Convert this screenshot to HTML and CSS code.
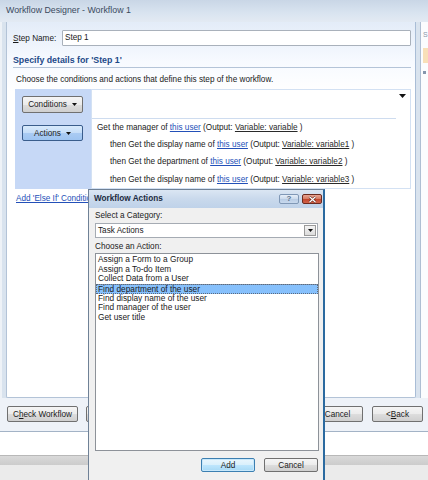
FILE: index.html
```html
<!DOCTYPE html>
<html>
<head>
<meta charset="utf-8">
<link rel="stylesheet" href="styles.css">
</head>
<body>
<div class="screen">
  <div class="titlebar">Workflow Designer - Workflow 1</div>
  <div class="window">
    <div class="window-main">
      <div class="panel">
        <div class="step-row">
          <span class="step-label"><u>S</u>tep Name:</span>
          <div class="step-input">Step 1</div>
        </div>
        <div class="heading">Specify details for 'Step 1'</div>
        <div class="desc">Choose the conditions and actions that define this step of the workflow.</div>
        <div class="block">
          <div class="block-left">
            <div class="btn btn-cond">Conditions <svg class="tri" width="5" height="3" viewBox="0 0 5 3"><path d="M0 0H5L2.5 3Z" fill="#111"/></svg></div>
            <div class="btn btn-actions">Actions <svg class="tri" width="5" height="3" viewBox="0 0 5 3"><path d="M0 0H5L2.5 3Z" fill="#111"/></svg></div>
          </div>
          <div class="block-right">
            <div class="cond-row"><svg class="cond-arrow" width="7" height="4" viewBox="0 0 7 4"><path d="M0 0H7L3.5 4Z" fill="#111"/></svg></div>
            <div class="act-lines">
              <div class="act">Get the manager of <a class="lnk">this user</a> (Output: <span class="var">Variable: variable</span> )</div>
              <div class="act sub">then Get the display name of <a class="lnk">this user</a> (Output: <span class="var">Variable: variable1</span> )</div>
              <div class="act sub">then Get the department of <a class="lnk">this user</a> (Output: <span class="var">Variable: variable2</span> )</div>
              <div class="act sub">then Get the display name of <a class="lnk">this user</a> (Output: <span class="var">Variable: variable3</span> )</div>
            </div>
          </div>
        </div>
        <div class="else-link"><a class="lnk">Add 'Else If' Condition</a></div>
      </div>
      <div class="side">
        <div class="side-txt">S</div>
        <div class="side-hl"></div>
        <div class="side-mark"></div>
      </div>
    </div>
    <div class="footer">
      <div class="btn fbtn btn-check">C<u>h</u>eck Workflow</div>
      <div class="btn fbtn btn-init">Initiation</div>
      <div class="btn fbtn btn-cancel">Cancel</div>
      <div class="btn fbtn btn-back">&lt; <u>B</u>ack</div>
      <div class="btn fbtn btn-next"></div>
    </div>
  </div>
  <div class="below-white"></div>
  <div class="below-bar"></div>
  <div class="below-grey"></div>

  <div class="dialog">
    <div class="dlg-title">
      <span class="dlg-title-text">Workflow Actions</span>
      <div class="tbtn tbtn-help">?</div>
      <div class="tbtn tbtn-close"><svg width="9" height="7" viewBox="0 0 9 7"><path d="M1.5 0.8L7.5 6.2M7.5 0.8L1.5 6.2" stroke="#5a1e14" stroke-width="2.4"/><path d="M1.5 0.8L7.5 6.2M7.5 0.8L1.5 6.2" stroke="#fff" stroke-width="1.3"/></svg></div>
    </div>
    <div class="dlg-body">
      <div class="dlg-label">Select a Category:</div>
      <div class="select">
        <span>Task Actions</span>
        <div class="select-btn"><svg width="5" height="3" viewBox="0 0 5 3"><path d="M0 0H5L2.5 3Z" fill="#111"/></svg></div>
      </div>
      <div class="dlg-label dlg-label2">Choose an Action:</div>
      <div class="list">
        <div class="item">Assign a Form to a Group</div>
        <div class="item">Assign a To-do Item</div>
        <div class="item">Collect Data from a User</div>
        <div class="item selected">Find department of the user</div>
        <div class="item">Find display name of the user</div>
        <div class="item">Find manager of the user</div>
        <div class="item">Get user title</div>
      </div>
      <div class="dlg-buttons">
        <div class="btn dbtn btn-default">Add</div>
        <div class="btn dbtn">Cancel</div>
      </div>
    </div>
  </div>
</div>
</body>
</html>
```

FILE: styles.css
```css
html, body {
  margin: 0;
  padding: 0;
  background: #fff;
}

.screen {
  position: relative;
  width: 428px;
  height: 480px;
  overflow: hidden;
  font-family: "Liberation Sans", Arial, sans-serif;
  font-size: 8.2px;
  color: #1a1a1a;
  background: #fff;
}

u { text-decoration: underline; }

/* ---------- title bar ---------- */
.titlebar {
  height: 22px;
  box-sizing: border-box;
  padding: 1px 0 0 6px;
  line-height: 18px;
  font-size: 8.8px;
  color: #3b4a5d;
  background: linear-gradient(#c9d6e6, #d9e4f0 60%, #e3eaf3);
}

/* ---------- main window ---------- */
.window {
  height: 410px;
  display: flex;
  flex-direction: column;
}

.window-main {
  height: 376px;
  display: flex;
  padding-left: 6px;
  background: linear-gradient(to right, #eef2f7 0, #eef2f7 2px, #d9e3ee 2px);
}

.panel {
  width: 410px;
  box-sizing: border-box;
  border-left: 1px solid #b3c3d7;
  border-right: 1px solid #a9bdd6;
  border-bottom: 1px solid #b3c3d7;
  border-bottom-left-radius: 2px;
  border-bottom-right-radius: 2px;
  background: linear-gradient(#e3ecf8, #f7faff 40px, #ffffff 70px);
  padding: 8px 4px 0 6px;
}

.step-row {
  display: flex;
  align-items: center;
  height: 16px;
}

.step-label {
  width: 49px;
  flex-shrink: 0;
}

.step-input {
  flex: 1;
  height: 16px;
  box-sizing: border-box;
  border: 1px solid #a9b1bb;
  border-radius: 1px;
  background: #fff;
  padding-left: 2px;
  line-height: 14px;
}

.heading {
  margin-top: 8px;
  height: 13px;
  line-height: 13px;
  font-size: 8.8px;
  font-weight: bold;
  color: #1d4a88;
  border-bottom: 1px solid #b4c4d8;
}

.desc {
  margin-top: 7px;
  height: 10px;
  line-height: 10px;
  padding-left: 3px;
}

.block {
  margin-top: 4px;
  margin-left: 2px;
  display: flex;
}

.block-left {
  width: 76px;
  flex-shrink: 0;
  background: #c6d8f6;
  padding: 7px 0 0 7px;
  box-sizing: border-box;
}

.btn {
  box-sizing: border-box;
  height: 16px;
  border: 1px solid #707070;
  border-radius: 2px;
  background: linear-gradient(#f5f5f5, #ebebeb 50%, #dddddd 51%, #cfcfcf);
  display: flex;
  align-items: center;
  justify-content: center;
  color: #1a1a1a;
  white-space: nowrap;
  flex-shrink: 0;
}

.tri { margin-left: 5px; }

.btn-cond {
  width: 61px;
  height: 17px;
}

.btn-actions {
  width: 61px;
  margin-top: 12px;
  border-color: #3a5d8c;
  background: linear-gradient(#d8eafc, #c5ddf8 50%, #aacbf3 51%, #9ec4f1);
}

.block-right {
  flex: 1;
  border: 1px solid #d3e1f3;
  background: #fff;
}

.cond-row {
  height: 28px;
  margin-right: 14px;
  border-bottom: 1px solid #cedcef;
  position: relative;
}

.cond-arrow {
  position: absolute;
  right: -10px;
  top: 4px;
}

.act {
  height: 17.2px;
  line-height: 17.2px;
  padding-left: 5px;
  white-space: nowrap;
}

.act.sub { padding-left: 18px; }

.lnk {
  color: #2350b8;
  text-decoration: underline;
}

.var {
  color: #2a2a2a;
  text-decoration: underline;
}

.else-link {
  margin-top: 5px;
  padding-left: 3px;
  height: 10px;
  line-height: 10px;
}

/* ---------- right strip ---------- */
.side {
  margin-left: 4px;
  flex: 1;
  border-left: 1px solid #aebed3;
  background: #fbfcfe;
}

.side-txt {
  margin: 8px 0 0 2px;
  height: 10px;
  line-height: 10px;
  color: #8a97a8;
  font-size: 7px;
}

.side-hl {
  margin-top: 8px;
  height: 15px;
  margin-left: 2px;
  background: #f8dfb8;
}

.side-mark {
  margin: 8px 0 0 2px;
  width: 3px;
  height: 3px;
  background: #8596ad;
}

/* ---------- footer ---------- */
.footer {
  height: 34px;
  box-sizing: border-box;
  padding-top: 8px;
  display: flex;
  align-items: flex-start;
  background: #eef2f8;
  border-bottom: 1px solid #a3b3c6;
  overflow: hidden;
}

.fbtn { height: 16px; }

.btn-check { width: 71px; margin-left: 7px; }
.btn-init { width: 62px; margin-left: 8px; }
.btn-cancel { width: 51px; margin-left: 164px; }
.btn-back { width: 51px; margin-left: 9px; }
.btn-next { width: 51px; margin-left: 5px; }

/* ---------- below window ---------- */
.below-white {
  height: 23px;
  background: #fff;
}

.below-bar {
  height: 10px;
  box-sizing: border-box;
  border-top: 1px solid #b8b8b8;
  background: linear-gradient(#d9d9d9, #cccccc);
}

.below-grey {
  height: 15px;
  background: #ebebeb;
}

/* ---------- dialog ---------- */
.dialog {
  position: absolute;
  left: 88px;
  top: 189px;
  width: 237px;
  height: 300px;
  box-sizing: border-box;
  border: 1px solid #6f8196;
  border-right: 2px solid #2b6aa0;
  background: #f0f0f0;
}

.dlg-title {
  height: 18px;
  display: flex;
  align-items: flex-start;
  background: linear-gradient(#dbe6f3, #c9d9ec 50%, #bfd2e9);
}

.dlg-title-text {
  flex: 1;
  padding-left: 5px;
  line-height: 18px;
  font-weight: bold;
  color: #1c2b40;
}

.tbtn {
  width: 20px;
  height: 10px;
  margin-top: 4px;
  box-sizing: border-box;
  border-radius: 2px;
  display: flex;
  align-items: center;
  justify-content: center;
}

.tbtn-help {
  border: 1px solid #8098b6;
  background: linear-gradient(#e6eef8, #cbdaec 50%, #b8cce4 51%, #c8d9ee);
  color: #5a6f8c;
  font-weight: bold;
  font-size: 8px;
  line-height: 8px;
}

.tbtn-close {
  margin-left: 3px;
  margin-right: 1px;
  border: 1px solid #6b2b20;
  background: linear-gradient(#e8a493, #d47a62 50%, #c2452c 51%, #d0624a);
}

.dlg-body {
  padding: 0 4px 0 6px;
}

.dlg-label {
  margin-top: 3px;
  height: 10px;
  line-height: 10px;
}

.dlg-label2 { margin-top: 4px; }

.select {
  margin-top: 2px;
  margin-right: 1px;
  height: 15px;
  box-sizing: border-box;
  border: 1px solid #a5abb3;
  background: #fff;
  display: flex;
  align-items: center;
  padding-left: 2px;
}

.select span { flex: 1; }

.select-btn {
  width: 12px;
  height: 11px;
  box-sizing: border-box;
  margin-right: 1px;
  border: 1px solid #9a9a9a;
  background: linear-gradient(#f4f4f4, #dcdcdc);
  display: flex;
  align-items: center;
  justify-content: center;
}

.list {
  margin-top: 1px;
  height: 198px;
  box-sizing: border-box;
  border: 1px solid #8d9299;
  background: #fff;
  padding-top: 1px;
}

.item {
  height: 9.7px;
  line-height: 9.7px;
  padding-left: 2px;
  font-size: 8.3px;
  white-space: nowrap;
}

.item.selected {
  background: #86c0fc;
  border-top: 1px solid #7d93ad;
  box-sizing: border-box;
  outline: 1px dotted #5a6a80;
  outline-offset: -1px;
}

.dlg-buttons {
  margin-top: 7px;
  display: flex;
  justify-content: flex-end;
  margin-right: 1px;
}

.dbtn {
  width: 54px;
  height: 14px;
  margin-left: 9px;
}

.btn-default {
  border-color: #3c7fb1;
  background: linear-gradient(#eaf6fd, #d9f0fc 50%, #bee6fd 51%, #a7d9f5);
  box-shadow: inset 0 0 0 1px #c8e8fb;
}
```
